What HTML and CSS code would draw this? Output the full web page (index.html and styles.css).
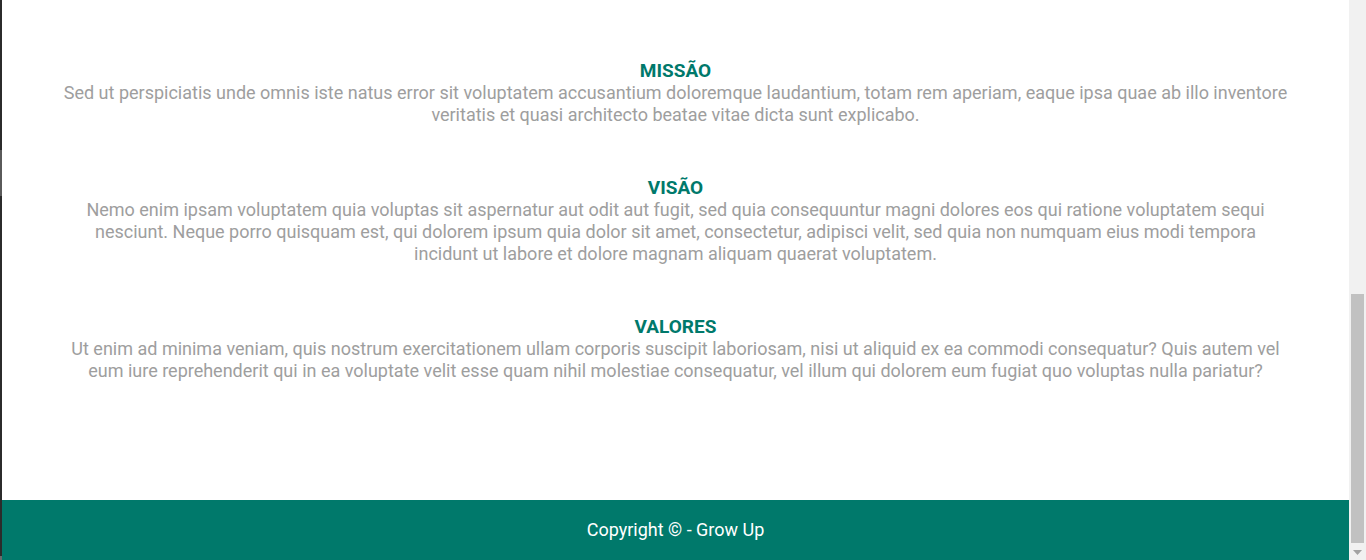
FILE: index.html
```html
<!DOCTYPE html>
<html lang="pt-BR">
<head>
<meta charset="utf-8">
<title>Grow Up - Sobre</title>
<link rel="stylesheet" href="styles.css">
</head>
<body>
<div class="window">
  <div class="edge"></div>
  <div class="page">
    <main class="content">
      <section class="block">
        <h2 class="title">MISSÃO</h2>
        <p class="text">Sed ut perspiciatis unde omnis iste natus error sit voluptatem accusantium doloremque laudantium, totam rem aperiam, eaque ipsa quae ab illo inventore veritatis et quasi architecto beatae vitae dicta sunt explicabo.</p>
      </section>
      <section class="block">
        <h2 class="title">VISÃO</h2>
        <p class="text">Nemo enim ipsam voluptatem quia voluptas sit aspernatur aut odit aut fugit, sed quia consequuntur magni dolores eos qui ratione voluptatem sequi nesciunt. Neque porro quisquam est, qui dolorem ipsum quia dolor sit amet, consectetur, adipisci velit, sed quia non numquam eius modi tempora incidunt ut labore et dolore magnam aliquam quaerat voluptatem.</p>
      </section>
      <section class="block">
        <h2 class="title">VALORES</h2>
        <p class="text">Ut enim ad minima veniam, quis nostrum exercitationem ullam corporis suscipit laboriosam, nisi ut aliquid ex ea commodi consequatur? Quis autem vel eum iure reprehenderit qui in ea voluptate velit esse quam nihil molestiae consequatur, vel illum qui dolorem eum fugiat quo voluptas nulla pariatur?</p>
      </section>
    </main>
    <footer class="footer">Copyright © - Grow Up</footer>
  </div>
  <div class="scrollbar">
    <div class="track"><div class="thumb"></div></div>
    <div class="arrow"><svg width="9" height="5" viewBox="0 0 9 5"><path d="M0 0H9L4.5 5Z" fill="#a3a3a3"/></svg></div>
  </div>
</div>
</body>
</html>
```
FILE: styles.css
```css
* { box-sizing: border-box; }
html, body { margin: 0; padding: 0; height: 100%; overflow: hidden; }
body { font-family: Roboto, "Liberation Sans", sans-serif; background: #fff; }

.window { display: flex; height: 560px; width: 1366px; }

.edge {
  width: 2px;
  flex: none;
  background: linear-gradient(to bottom, #2b2b2b 0, #2b2b2b 150px, #5a5a5a 150px, #5a5a5a 196px, #2b2b2b 196px, #2b2b2b 556px, #6a6a6a 556px);
}

.page { flex: 1; display: flex; flex-direction: column; min-width: 0; }

.content {
  height: 500px;
  padding-top: 60px;
  display: flex;
  flex-direction: column;
  gap: 51px;
  align-items: center;
}

.block { width: 1226px; text-align: center; }

.title {
  margin: 0;
  font-size: 19px;
  line-height: 22px;
  font-weight: 700;
  color: #00796b;
}

.text {
  margin: 0;
  font-size: 18px;
  line-height: 22px;
  color: #9e9e9e;
}

.footer {
  height: 60px;
  padding-bottom: 2px;
  background: #00796b;
  color: #fff;
  font-size: 18px;
  display: flex;
  align-items: center;
  justify-content: center;
}

.scrollbar {
  width: 17px;
  flex: none;
  background: #f1f1f1;
  display: flex;
  flex-direction: column;
  padding: 0 2px;
}

.track { flex: 1; display: flex; flex-direction: column; justify-content: flex-end; padding-bottom: 1px; }
.thumb { height: 249px; background: #c1c1c1; }

.arrow { height: 16px; display: flex; align-items: center; justify-content: center; }
```
